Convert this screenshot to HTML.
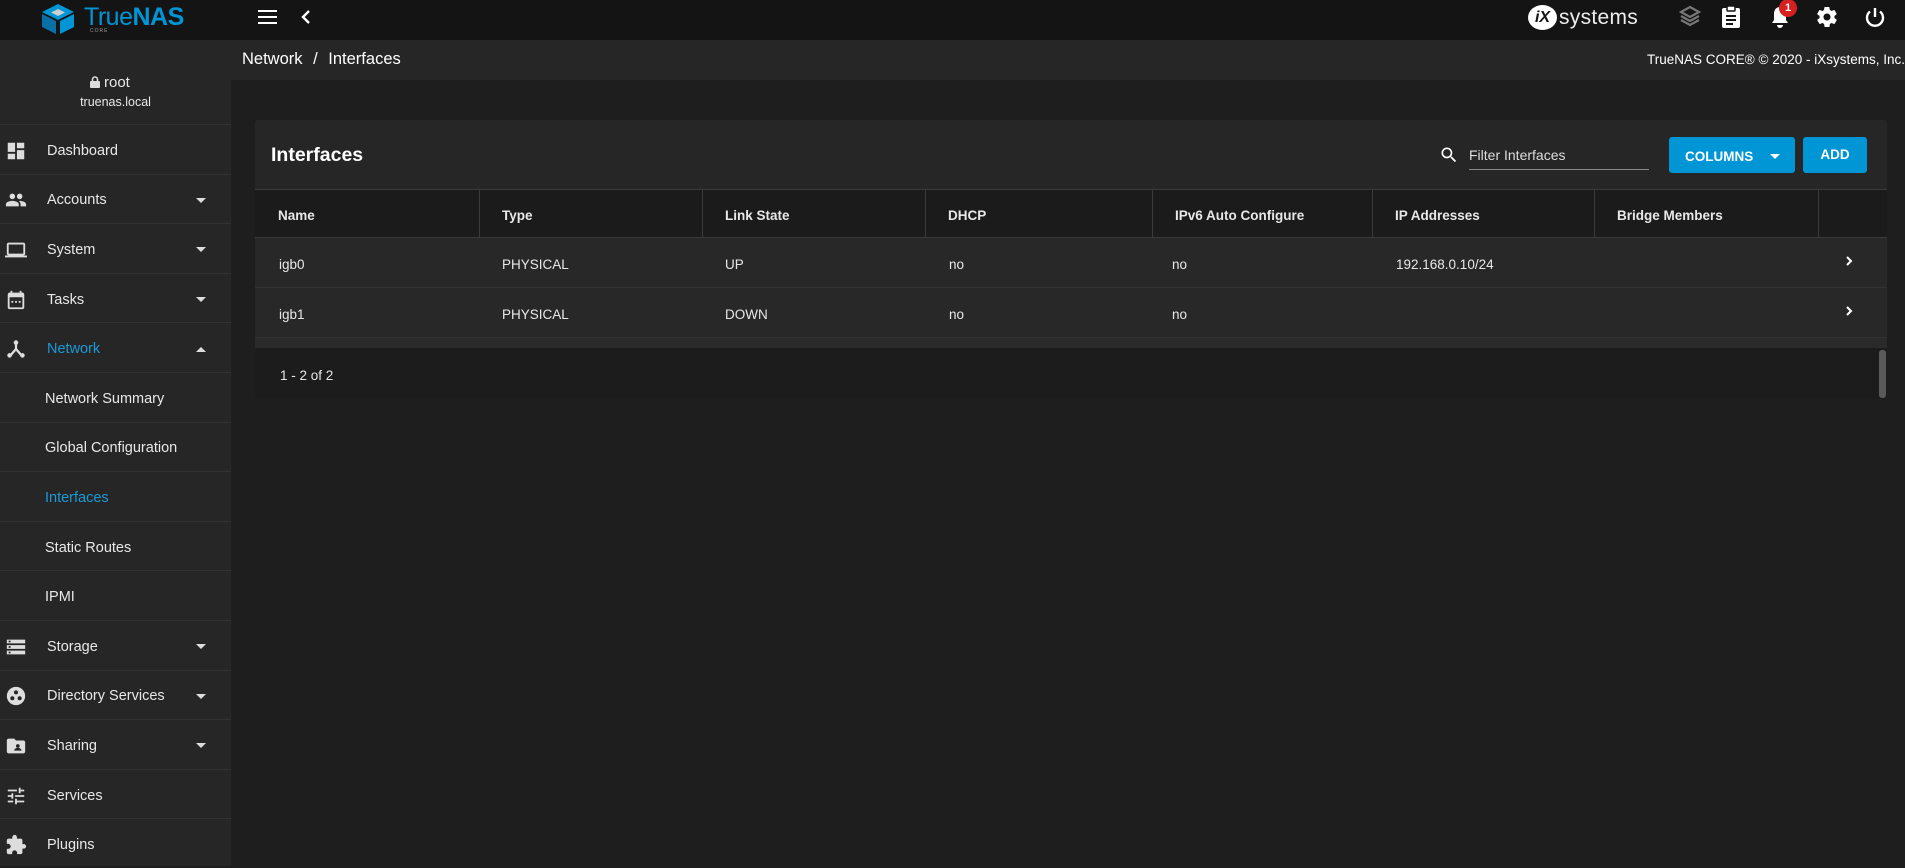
<!DOCTYPE html>
<html><head><meta charset="utf-8"><style>
*{box-sizing:border-box;margin:0;padding:0}
body{width:1905px;height:866px;overflow:hidden;background:#1e1e1e;font-family:"Liberation Sans",Arial,sans-serif;color:#e8e8e8;position:relative}
.a{position:absolute}
.top{left:0;top:0;width:1905px;height:40px;background:#141414}
.side{left:0;top:40px;width:231px;height:826px;background:#262626}
.bc{left:231px;top:40px;width:1674px;height:40px;background:#262626}
.item{position:absolute;left:0;width:231px;height:49.6px;border-top:1px solid #323232;font-size:14.5px;display:flex;align-items:center;padding-top:3px}
.item .t{position:absolute;left:47px}
.item.sub .t{left:45px}
.item .ic{position:absolute;left:5px;width:22px;height:22px}
.caret{position:absolute;left:196px;width:0;height:0;border-left:5px solid transparent;border-right:5px solid transparent;border-top:5px solid #ddd}
.caret.up{border-top:0;border-bottom:5px solid #ddd}
.card{left:255px;top:120px;width:1632px;height:279px;background:#262626;border-radius:3px;overflow:hidden}
.hdr{position:absolute;left:0;top:69px;width:1632px;height:49px;background:#1b1b1b;border-top:1px solid #3a3a3a;border-bottom:1px solid #3a3a3a}
.row{position:absolute;left:0;width:1632px;height:50px;background:#282828;border-bottom:1px solid #333}
.c{position:absolute;top:0;height:100%;display:flex;align-items:center;font-size:13.5px;padding-top:3px}
.hdr .c{font-weight:bold;font-size:13.5px}
.sep{position:absolute;top:0;width:1px;height:100%;background:#3a3a3a}
.blue{color:#1a9ad6}
</style></head><body>
<div class="a top"></div>
<svg class="a" style="left:40px;top:3px" width="36" height="32" viewBox="0 0 36 32">
<polygon points="18,1 34,9 18,17 2,9" fill="#0095d5"/>
<polygon points="18,6 25,9.5 18,13 11,9.5" fill="#cfcfcf"/>
<polygon points="2,11 16,18 16,31 2,24" fill="#0a6fa5"/>
<polygon points="34,11 20,18 20,31 34,24" fill="#0095d5"/>
</svg>
<div class="a" style="left:84px;top:3px;font-size:25px;color:#0095d5;letter-spacing:-0.5px">True<b>NAS</b></div>
<div class="a" style="left:90px;top:28px;font-size:5px;color:#999;letter-spacing:1px">CORE</div>
<div class="a" style="left:258px;top:10px;width:19px;height:2px;background:#fff;box-shadow:0 6px 0 #fff,0 12px 0 #fff"></div>
<svg class="a" style="left:300px;top:9px" width="12" height="16" viewBox="0 0 12 16"><path d="M9 2 L3 8 L9 14" stroke="#fff" stroke-width="2.4" fill="none"/></svg>
<div class="a" style="left:1528px;top:5px;width:29px;height:25px;border-radius:50%;background:#fff;color:#141414;font-weight:bold;font-style:italic;font-size:16px;text-align:center;line-height:25px">iX</div>
<div class="a" style="left:1559px;top:6px;font-size:21px;color:#eee;letter-spacing:0.3px">systems</div>
<svg class="a" style="left:1678px;top:5px" width="24" height="24" viewBox="0 0 24 24"><path d="M12 2 L21 7 L12 12 L3 7Z M3 11 L12 16 L21 11 M3 15 L12 20 L21 15" stroke="#777" stroke-width="2.2" fill="none"/></svg>
<svg class="a" style="left:1720px;top:5px" width="22" height="24" viewBox="0 0 22 24"><rect x="2" y="3" width="18" height="20" rx="2" fill="#fff"/><rect x="7" y="1" width="8" height="5" rx="1" fill="#fff" stroke="#141414" stroke-width="1.5"/><path d="M6 11h10M6 15h10M6 19h7" stroke="#141414" stroke-width="2"/></svg>
<svg class="a" style="left:1769px;top:5px" width="22" height="24" viewBox="0 0 22 24"><path d="M11 2c-4 0-6 3-6 7v6l-2 3h16l-2-3V9c0-4-2-7-6-7z M8 20h6a3 3 0 0 1-6 0z" fill="#fff"/></svg>
<div class="a" style="left:1779px;top:-1px;width:18px;height:18px;border-radius:50%;background:#d42020;color:#fff;font-size:11px;font-weight:bold;text-align:center;line-height:18px">1</div>
<svg class="a" style="left:1815px;top:5px" width="24" height="24" viewBox="0 0 24 24"><path fill="#fff" d="M19.4 13c.04-.3.06-.65.06-1s-.02-.7-.07-1l2.1-1.650c.2-.15.24-.42.12-.64l-2-3.46c-.12-.22-.38-.3-.6-.22l-2.5 1c-.5-.4-1.08-.73-1.7-.98L14.4 2.4c-.03-.24-.24-.4-.5-.4h-4c-.25 0-.46.16-.5.4l-.37 2.65c-.6.25-1.17.6-1.7.98l-2.48-1c-.22-.08-.48 0-.6.22l-2 3.46c-.13.22-.08.5.12.64L4.57 11c-.04.3-.07.66-.07 1s.02.7.06 1l-2.1 1.65c-.2.15-.25.42-.13.64l2 3.46c.12.22.38.3.6.22l2.5-1c.5.4 1.08.73 1.7.98l.37 2.65c.04.24.25.4.5.4h4c.25 0 .46-.16.5-.4l.37-2.65c.6-.25 1.170-.58 1.7-.98l2.48 1c.23.08.48 0 .6-.22l2-3.46c.12-.22.07-.5-.12-.64L19.4 13zM12 15.5c-1.93 0-3.5-1.57-3.5-3.5s1.57-3.5 3.5-3.5 3.5 1.57 3.5 3.5-1.57 3.5-3.5 3.5z"/></svg>
<svg class="a" style="left:1864px;top:5px" width="22" height="24" viewBox="0 0 22 24"><path d="M11 3v9 M6 6.5a8 8 0 1 0 10 0" stroke="#fff" stroke-width="2.4" fill="none"/></svg>

<div class="a side"></div>
<div class="a bc"></div>
<div class="a" style="left:242px;top:50px;font-size:16.5px;color:#fff">Network <span style="margin:0 6px">/</span> Interfaces</div>
<div class="a" style="right:0;top:52px;font-size:13.5px;color:#fff">TrueNAS CORE® © 2020 - iXsystems, Inc.</div>

<svg class="a" style="left:90px;top:76px" width="10" height="12" viewBox="0 0 10 12"><rect x="0" y="5" width="10" height="7" rx="1" fill="#ddd"/><path d="M2.5 5.5V3.5a2.5 2.5 0 0 1 5 0v2" stroke="#ddd" stroke-width="1.6" fill="none"/></svg>
<div class="a" style="left:104px;top:74px;font-size:15px">root</div>
<div class="a" style="left:0;width:231px;text-align:center;top:95px;font-size:12.5px">truenas.local</div>

<div class="item" style="top:124px"><svg class="ic" viewBox="0 0 24 24"><path fill="#ddd" d="M3 13h8V3H3v10zm0 8h8v-6H3v6zm10 0h8V11h-8v10zm0-18v6h8V3h-8z"/></svg><span class="t">Dashboard</span></div>
<div class="item" style="top:173.6px"><svg class="ic" viewBox="0 0 24 24"><path fill="#ddd" d="M16 11c1.66 0 3-1.34 3-3s-1.34-3-3-3-3 1.34-3 3 1.34 3 3 3zm-8 0c1.66 0 3-1.34 3-3S9.66 5 8 5 5 6.34 5 8s1.34 3 3 3zm0 2c-2.33 0-7 1.170-7 3.5V19h14v-2.5c0-2.33-4.67-3.5-7-3.5zm8 0c-.29 0-.62.02-.97.05 1.160.84 1.97 1.97 1.97 3.45V19h6v-2.5c0-2.33-4.67-3.5-7-3.5z"/></svg><span class="t">Accounts</span><i class="caret"></i></div>
<div class="item" style="top:223.2px"><svg class="ic" viewBox="0 0 24 24"><path fill="#ddd" d="M20 18c1.1 0 2-.9 2-2V6c0-1.1-.9-2-2-2H4c-1.1 0-2 .9-2 2v10c0 1.1.9 2 2 2H0v2h24v-2h-4zM4 6h16v10H4V6z"/></svg><span class="t">System</span><i class="caret"></i></div>
<div class="item" style="top:272.8px"><svg class="ic" viewBox="0 0 24 24"><path fill="#ddd" d="M19 4h-1V2h-2v2H8V2H6v2H5c-1.1 0-2 .9-2 2v14c0 1.1.9 2 2 2h14c1.1 0 2-.9 2-2V6c0-1.1-.9-2-2-2zm0 16H5V9h14v11zM7 13h2v2H7zm4 0h2v2h-2zm4 0h2v2h-2z"/></svg><span class="t">Tasks</span><i class="caret"></i></div>
<div class="item" style="top:322.4px"><svg class="ic" viewBox="0 0 24 24"><path d="M12 4v8 M12 12l-6 7 M12 12l6 7" stroke="#ddd" stroke-width="2.5" fill="none"/><circle cx="12" cy="5" r="2.5" fill="#ddd"/><circle cx="5" cy="19" r="2.5" fill="#ddd"/><circle cx="19" cy="19" r="2.5" fill="#ddd"/></svg><span class="t blue">Network</span><i class="caret up"></i></div>
<div class="item sub" style="top:372px"><span class="t">Network Summary</span></div>
<div class="item sub" style="top:421.6px"><span class="t">Global Configuration</span></div>
<div class="item sub" style="top:471.2px"><span class="t blue">Interfaces</span></div>
<div class="item sub" style="top:520.8px"><span class="t">Static Routes</span></div>
<div class="item sub" style="top:570.4px"><span class="t">IPMI</span></div>
<div class="item" style="top:620px"><svg class="ic" viewBox="0 0 24 24"><path fill="#ddd" d="M2 20h20v-4H2v4zm2-3h2v2H4v-2zM2 4v4h20V4H2zm4 3H4V5h2v2zm-4 7h20v-4H2v4zm2-3h2v2H4v-2z"/></svg><span class="t">Storage</span><i class="caret"></i></div>
<div class="item" style="top:669.6px"><svg class="ic" viewBox="0 0 24 24"><circle cx="12" cy="12" r="10" fill="#ddd"/><circle cx="12" cy="8" r="2.2" fill="#262626"/><circle cx="8" cy="14.5" r="2.2" fill="#262626"/><circle cx="16" cy="14.5" r="2.2" fill="#262626"/></svg><span class="t">Directory Services</span><i class="caret"></i></div>
<div class="item" style="top:719.2px"><svg class="ic" viewBox="0 0 24 24"><path fill="#ddd" d="M20 6h-8l-2-2H4c-1.1 0-2 .9-2 2v12c0 1.1.9 2 2 2h16c1.1 0 2-.9 2-2V8c0-1.1-.9-2-2-2z"/><circle cx="14" cy="12" r="2" fill="#262626"/><path d="M10 17c0-2 2-3 4-3s4 1 4 3z" fill="#262626"/></svg><span class="t">Sharing</span><i class="caret"></i></div>
<div class="item" style="top:768.8px"><svg class="ic" viewBox="0 0 24 24"><path fill="#ddd" d="M3 17v2h6v-2H3zM3 5v2h10V5H3zm10 16v-2h8v-2h-8v-2h-2v6h2zM7 9v2H3v2h4v2h2V9H7zm14 4v-2H11v2h10zm-6-4h2V7h4V5h-4V3h-2v6z"/></svg><span class="t">Services</span></div>
<div class="item" style="top:818.4px"><svg class="ic" viewBox="0 0 24 24"><path fill="#ddd" d="M20.5 11H19V7c0-1.1-.9-2-2-2h-4V3.5a2.5 2.5 0 0 0-5 0V5H4c-1.1 0-2 .9-2 2v3.8h1.5c1.5 0 2.7 1.2 2.7 2.7S5 16.2 3.5 16.2H2V20c0 1.1.9 2 2 2h3.8v-1.5c0-1.5 1.2-2.7 2.7-2.7s2.7 1.2 2.7 2.7V22H17c1.1 0 2-.9 2-2v-4h1.5a2.5 2.5 0 0 0 0-5z"/></svg><span class="t">Plugins</span></div>

<div class="a card">
  <div class="a" style="left:16px;top:24px;font-size:19.5px;font-weight:bold;color:#fff">Interfaces</div>
  <svg class="a" style="left:1184px;top:25px" width="20" height="20" viewBox="0 0 24 24"><path fill="#fff" d="M15.5 14h-.79l-.28-.27A6.47 6.47 0 0 0 16 9.5 6.5 6.5 0 1 0 9.5 16c1.61 0 3.09-.59 4.23-1.57l.27.28v.79l5 4.99L20.49 19l-4.99-5zm-6 0C7.01 14 5 11.99 5 9.5S7.01 5 9.5 5 14 7.01 14 9.5 11.99 14 9.5 14z"/></svg>
  <div class="a" style="left:1214px;top:27px;font-size:14px;color:#ddd">Filter Interfaces</div>
  <div class="a" style="left:1214px;top:49px;width:180px;height:1px;background:#888"></div>
  <div class="a" style="left:1414px;top:17px;width:126px;height:36px;background:#0095d5;border-radius:3px"></div>
  <div class="a" style="left:1430px;top:29px;font-size:13.5px;font-weight:bold;color:#fff">COLUMNS</div>
  <i class="a" style="left:1515px;top:34px;border-left:5px solid transparent;border-right:5px solid transparent;border-top:5px solid #fff"></i>
  <div class="a" style="left:1548px;top:17px;width:64px;height:36px;background:#0095d5;border-radius:3px;color:#fff;font-weight:bold;font-size:13.5px;text-align:center;line-height:35px">ADD</div>

  <div class="hdr">
    <div class="c" style="left:23px">Name</div>
    <div class="sep" style="left:224px"></div><div class="c" style="left:247px">Type</div>
    <div class="sep" style="left:447px"></div><div class="c" style="left:470px">Link State</div>
    <div class="sep" style="left:670px"></div><div class="c" style="left:693px">DHCP</div>
    <div class="sep" style="left:897px"></div><div class="c" style="left:920px">IPv6 Auto Configure</div>
    <div class="sep" style="left:1117px"></div><div class="c" style="left:1140px">IP Addresses</div>
    <div class="sep" style="left:1339px"></div><div class="c" style="left:1362px">Bridge Members</div>
    <div class="sep" style="left:1563px"></div>
  </div>
  <div class="row" style="top:118px">
    <div class="c" style="left:24px">igb0</div><div class="c" style="left:247px">PHYSICAL</div><div class="c" style="left:470px">UP</div><div class="c" style="left:694px">no</div><div class="c" style="left:917px">no</div><div class="c" style="left:1141px">192.168.0.10/24</div>
    <svg class="a" style="left:1589px;top:17px" width="10" height="12" viewBox="0 0 10 12"><path d="M3 2l4 4-4 4" stroke="#fff" stroke-width="2" fill="none"/></svg>
  </div>
  <div class="row" style="top:168px">
    <div class="c" style="left:24px">igb1</div><div class="c" style="left:247px">PHYSICAL</div><div class="c" style="left:470px">DOWN</div><div class="c" style="left:694px">no</div><div class="c" style="left:917px">no</div>
    <svg class="a" style="left:1589px;top:17px" width="10" height="12" viewBox="0 0 10 12"><path d="M3 2l4 4-4 4" stroke="#fff" stroke-width="2" fill="none"/></svg>
  </div>
  <div class="a" style="left:0;top:218px;width:1632px;height:10px;background:#2a2a2a"></div>
  <div class="a" style="left:0;top:228px;width:1632px;height:51px;background:#1c1c1c"></div>
  <div class="a" style="left:25px;top:248px;font-size:13.5px">1 - 2 of 2</div>
  <div class="a" style="left:1624px;top:230px;width:7px;height:48px;background:#5a5a5a;border-radius:3px"></div>
</div>
</body></html>
